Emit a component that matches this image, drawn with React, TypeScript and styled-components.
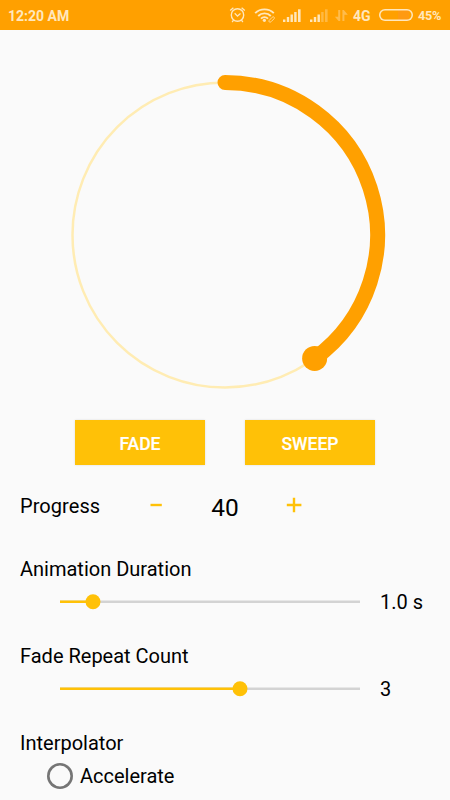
import React from "react";
import styled, { createGlobalStyle } from "styled-components";

const ORANGE = "#ffa000";
const AMBER = "#ffc107";
const TINT = "#ffe7bd";

const GlobalStyle = createGlobalStyle`
  * { box-sizing: border-box; }
  body { margin: 0; background: #fafafa; overflow: hidden; }
`;

const Screen = styled.div`
  width: 450px;
  height: 800px;
  overflow: hidden;
  display: flex;
  flex-direction: column;
  background: #fafafa;
  color: #000;
  font-family: Roboto, sans-serif;
  font-size: 20px;
  line-height: 24px;
`;

const StatusBar = styled.header`
  flex: none;
  display: flex;
  align-items: center;
  height: 30px;
  padding: 1px 8px 0;
  background: ${ORANGE};
  color: ${TINT};
  font-weight: 700;
`;

const Clock = styled.span`
  flex: 1;
  font-size: 14px;
`;

const StatusIcons = styled.svg`
  flex: none;
  width: 124px;
  height: 28px;
  margin-bottom: 1px;
`;

const Network = styled.span`
  width: 27px;
  padding-left: 1px;
  font-size: 14px;
`;

const Battery = styled.span`
  width: 34px;
  height: 12px;
  margin-bottom: 1px;
  border-radius: 6px;
  box-shadow: inset 0 0 0 1.5px ${TINT};
  background: linear-gradient(90deg, transparent 55%, #ff9a12 55%, #ff9a12 88%, transparent 88%);
`;

const BatteryLevel = styled.span`
  width: 24px;
  margin-left: 5px;
  font-size: 12.7px;
  letter-spacing: -0.25px;
`;

const Dial = styled.svg`
  flex: none;
  display: block;
  width: 450px;
  height: 390px;
`;

const Actions = styled.div`
  flex: none;
  display: flex;
  justify-content: center;
  gap: 40px;
`;

const ActionButton = styled.button`
  width: 130px;
  height: 45px;
  padding: 2px 0 0;
  border: 0;
  background: ${AMBER};
  box-shadow: 0 0 2px rgba(0, 0, 0, 0.12);
  color: #fff;
  font: 500 17.5px/24px Roboto, sans-serif;
  -webkit-text-stroke: 0.2px #fff;
`;

const ProgressRow = styled.div`
  flex: none;
  display: grid;
  grid-template-columns: 120px 32px 106px 31px;
  align-items: center;
  height: 50px;
  margin: 15px 20px 0;
`;

const ProgressLabel = styled.span`
  padding-top: 2px;
  letter-spacing: 0.06px;
`;

const Value = styled.span`
  padding-top: 6px;
  text-align: center;
  font-size: 24.5px;
`;

const StepButton = styled.button`
  display: flex;
  justify-content: center;
  padding: 0;
  border: 0;
  background: none;
`;

const Setting = styled.section`
  flex: none;
  height: 87px;
  padding: 0 20px;
`;

const Settings = styled.div`
  display: flex;
  flex-direction: column;
  padding-top: 27px;
`;

const SliderRow = styled.div`
  display: flex;
  align-items: center;
  gap: 20px;
  height: 24px;
  margin: 9px 0 0 40px;
`;

const Slider = styled.svg`
  flex: none;
  width: 300px;
  height: 16px;
`;

const Option = styled.label`
  display: flex;
  align-items: center;
  gap: 7px;
  margin: 9px 0 0 27px;
`;

const Radio = styled.span`
  width: 26px;
  height: 26px;
  margin: -2px 0 -1px;
  box-shadow: inset 0 0 0 2.6px #757575;
  border-radius: 50%;
`;

const SignalAndAlarm = () => (
  <StatusIcons viewBox="229 1 124 28" fill="none" stroke={TINT}>
    <circle cx="238.5" cy="15" r="6.2" strokeWidth="1.4" />
    <path d="M235.7 13.3l2.8 2.8 3-2.5M231.2 10.5l3.2-2.8M245.8 10.5l-3.2-2.8M234.6 20.2l-1.5 1.8M242.4 20.2l1.5 1.8" strokeWidth="1.3" />
    <path d="M256.2 13.1c5-5 13.6-5 18.6 0M259.2 16c3.5-3.5 9.2-3.5 12.6 0M262 18.7c2-2 5-2 7 0" strokeWidth="1.9" />
    <circle cx="265.4" cy="20.3" r="1.6" fill={TINT} stroke="none" />
    <path d="M270.2 20.4l3-3.1c1.4-1.3 3 .3 1.7 1.6l-2.8 2.8c-1.3 1.2-2.9-.2-1.9-1.3z" strokeWidth="1" opacity=".8" />
    <g fill={TINT} stroke="none">
      <rect x="284" y="19.5" width="2.4" height="2.5" />
      <rect x="287.8" y="17" width="2.4" height="5" />
      <rect x="291.5" y="14.5" width="2.4" height="7.5" />
      <rect x="295.2" y="12" width="2.4" height="10" />
      <rect x="299" y="9.3" width="2.6" height="12.7" />
      <rect x="311" y="19.5" width="2.4" height="2.5" />
      <rect x="314.8" y="17" width="2.4" height="5" />
      <rect x="318.5" y="14.5" width="2.4" height="7.5" />
      <rect x="322.2" y="12" width="2.4" height="10" opacity=".35" />
      <rect x="326" y="9.3" width="2.6" height="12.7" opacity=".35" />
      <path d="M339.2 10h2v11h-1.6l-3.7-4.3h3.3zM343.4 21v-11h1.4l4 4.8h-3.4v6.2z" opacity=".4" />
    </g>
  </StatusIcons>
);

const settings = [
  { label: "Animation Duration", value: 11, text: "1.0 s" },
  { label: "Fade Repeat Count", value: 60, text: "3" },
];

export default function App() {
  return (
    <Screen>
      <GlobalStyle />
      <StatusBar>
        <Clock>12:20 AM</Clock>
        <SignalAndAlarm />
        <Network>4G</Network>
        <Battery />
        <BatteryLevel>45%</BatteryLevel>
      </StatusBar>
      <Dial viewBox="0 30 450 390" fill="none">
        <circle cx="225" cy="235" r="152.5" stroke="#ffecb3" strokeWidth="2.5" />
        <path d="M225 82.5A152.5 152.5 0 0 1 314.64 358.38" stroke={ORANGE} strokeWidth="15" strokeLinecap="round" />
        <circle cx="314.64" cy="358.38" r="12.5" fill={ORANGE} />
      </Dial>
      <Actions>
        <ActionButton>FADE</ActionButton>
        <ActionButton>SWEEP</ActionButton>
      </Actions>
      <ProgressRow>
        <ProgressLabel>Progress</ProgressLabel>
        <StepButton aria-label="Decrease">
          <svg width="16" height="16" stroke={AMBER} strokeWidth="2.4">
            <path d="M2.5 8h11.3" />
          </svg>
        </StepButton>
        <Value>40</Value>
        <StepButton aria-label="Increase">
          <svg width="16" height="16" stroke={AMBER} strokeWidth="2.4">
            <path d="M.8 8h14.6M8 .8v14.4" />
          </svg>
        </StepButton>
      </ProgressRow>
      <Settings>
        {settings.map((s) => (
          <Setting key={s.label}>
            <div>{s.label}</div>
            <SliderRow>
              <Slider viewBox="0 0 300 16" strokeWidth="2.5">
                <path d="M0 7.8h300" stroke="#d3d3d3" />
                <path d={`M0 7.8h${s.value * 3}`} stroke={AMBER} />
                <circle cx={s.value * 3} cy="7.8" r="7.5" fill={AMBER} />
              </Slider>
              <span>{s.text}</span>
            </SliderRow>
          </Setting>
        ))}
        <Setting>
          <div>Interpolator</div>
          <Option>
            <Radio />
            Accelerate
          </Option>
        </Setting>
      </Settings>
    </Screen>
  );
}
